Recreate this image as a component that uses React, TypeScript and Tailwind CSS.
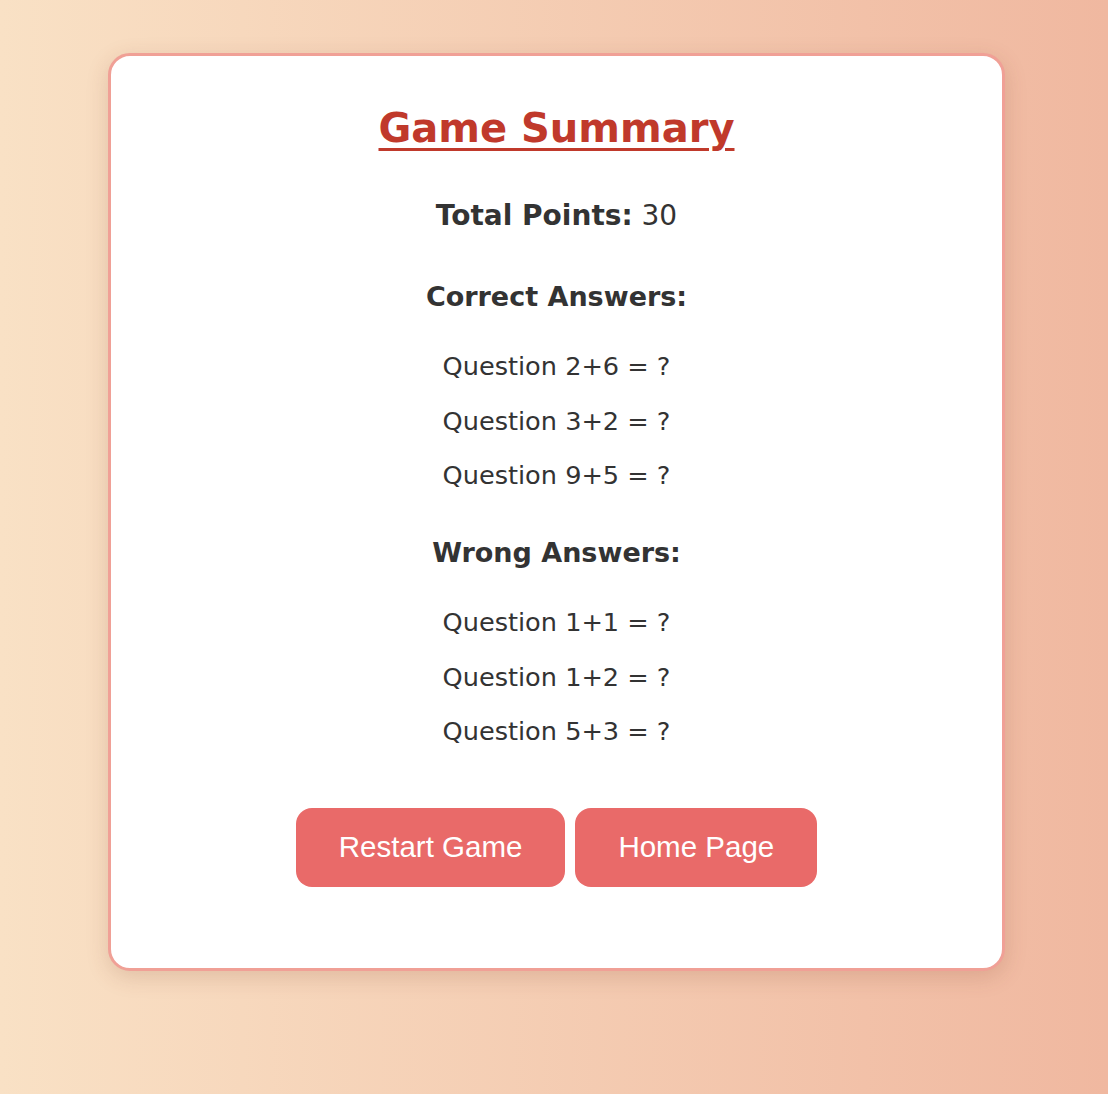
import React from "react";

const correct = ["Question 2+6 = ?", "Question 3+2 = ?", "Question 9+5 = ?"];
const wrong = ["Question 1+1 = ?", "Question 1+2 = ?", "Question 5+3 = ?"];

export default function App() {
  return (
    <div
      className="w-[1108px] h-[1094px] bg-[linear-gradient(to_right,#f9e1c5,#f0b8a0)] pt-[53px] overflow-hidden"
      style={{ fontFamily: '"Comic Sans MS", "DejaVu Sans", sans-serif' }}
    >
      <div className="w-[897px] ml-[108px] bg-white border-[3px] border-[#f0a096] rounded-[22px] shadow-[0_6px_22px_rgba(120,60,40,0.18)] pt-[48px] pb-[81px] flex flex-col items-center text-[#333]">
        <h1 className="text-[40px] leading-[48px] font-bold text-[#c0392b] underline decoration-[3px] underline-offset-[6px]">
          Game Summary
        </h1>
        <p className="mt-[48px] text-[28px] leading-[32px]">
          <span className="font-bold">Total Points:</span> 30
        </p>
        <h3 className="mt-[49px] text-[27px] leading-[32px] font-bold">Correct Answers:</h3>
        <ul className="mt-[26px] flex flex-col items-center">
          {correct.map((q) => (
            <li key={q} className="text-[25.6px] leading-[54.5px]">
              {q}
            </li>
          ))}
        </ul>
        <h3 className="mt-[34px] text-[27px] leading-[32px] font-bold">Wrong Answers:</h3>
        <ul className="mt-[26.5px] flex flex-col items-center">
          {wrong.map((q) => (
            <li key={q} className="text-[25.6px] leading-[54.5px]">
              {q}
            </li>
          ))}
        </ul>
        <div className="mt-[49.5px] flex gap-[10px]">
          <button
            className="h-[79px] px-[43px] rounded-[16px] bg-[#e96a69] text-white text-[29.5px]"
            style={{ fontFamily: '"Liberation Sans", Arial, sans-serif' }}
          >
            Restart Game
          </button>
          <button
            className="h-[79px] px-[43px] rounded-[16px] bg-[#e96a69] text-white text-[29.5px]"
            style={{ fontFamily: '"Liberation Sans", Arial, sans-serif' }}
          >
            Home Page
          </button>
        </div>
      </div>
    </div>
  );
}
